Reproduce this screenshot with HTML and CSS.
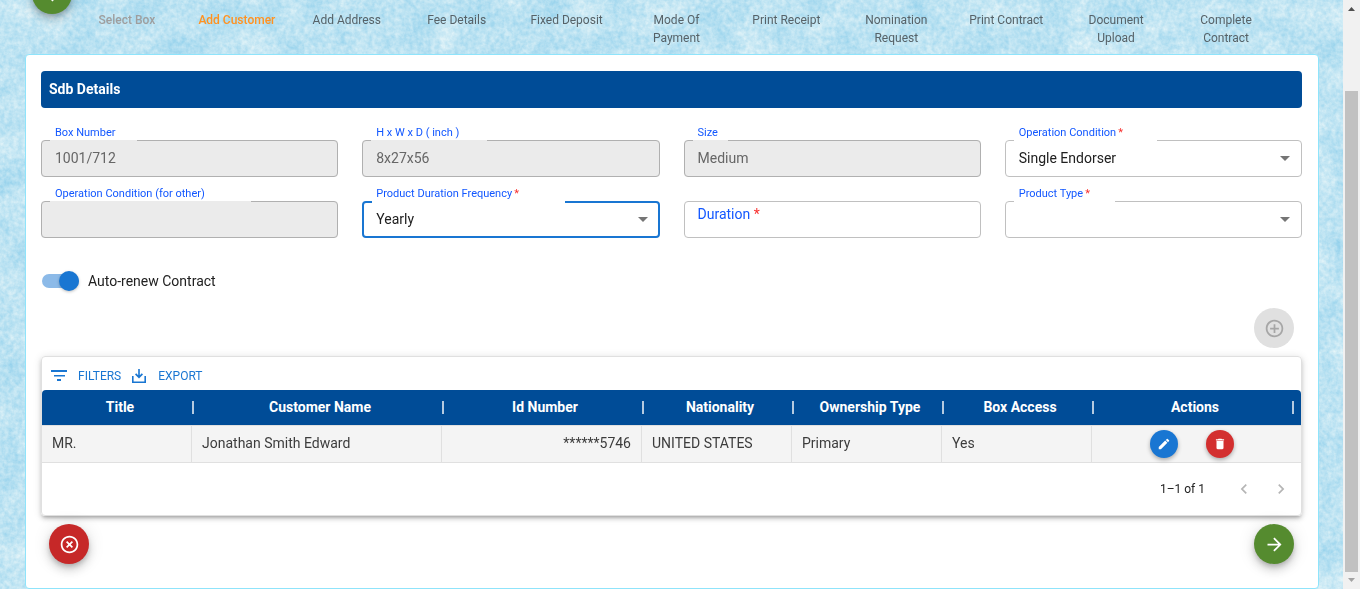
FILE: index.html
```html
<!DOCTYPE html>
<html lang="en">
<head>
<meta charset="utf-8">
<meta name="viewport" content="width=device-width, initial-scale=1">
<title>Add Customer</title>
<link rel="stylesheet" href="styles.css">
</head>
<body>
<svg class="texture" aria-hidden="true">
  <filter id="paper" x="0" y="0" width="100%" height="100%" color-interpolation-filters="sRGB">
    <feTurbulence type="fractalNoise" baseFrequency="0.03" numOctaves="3" seed="8"/>
    <feColorMatrix result="blotches" values="0.5 0 0 0 0.49  0.22 0 0 0 0.78  0.08 0 0 0 0.91  0 0 0 0 1"/>
    <feTurbulence type="fractalNoise" baseFrequency="0.22" numOctaves="3" seed="3"/>
    <feColorMatrix result="grain" values="0.5 0 0 0 0.49  0.22 0 0 0 0.78  0.08 0 0 0 0.91  0 0 0 0 1"/>
    <feComposite in="blotches" in2="grain" operator="arithmetic" k2="0.5" k3="0.5"/>
  </filter>
  <rect width="100%" height="100%" filter="url(#paper)"/>
</svg>
<div class="app">
  <div class="page">
    <header class="stepper">
      <button class="fab fab-green" type="button" aria-label="Back">
        <svg viewBox="0 0 24 24"><path d="M20 11H7.83l5.59-5.59L12 4l-8 8 8 8 1.41-1.41L7.83 13H20z"/></svg>
      </button>
      <ol class="steps">
        <li class="step done">Select Box</li>
        <li class="step active">Add Customer</li>
        <li class="step">Add Address</li>
        <li class="step">Fee Details</li>
        <li class="step">Fixed Deposit</li>
        <li class="step">Mode Of Payment</li>
        <li class="step">Print Receipt</li>
        <li class="step">Nomination Request</li>
        <li class="step">Print Contract</li>
        <li class="step">Document Upload</li>
        <li class="step">Complete Contract</li>
      </ol>
    </header>

    <main class="panel">
      <h1 class="banner">Sdb Details</h1>

      <form class="fields">
        <div class="field">
          <label class="field-label" for="box">Box Number</label>
          <div class="control disabled"><input id="box" value="1001/712" disabled><fieldset aria-hidden="true"><legend>Box Number</legend></fieldset></div>
        </div>
        <div class="field">
          <label class="field-label" for="dims">H x W x D ( inch )</label>
          <div class="control disabled"><input id="dims" value="8x27x56" disabled><fieldset aria-hidden="true"><legend>H x W x D ( inch )</legend></fieldset></div>
        </div>
        <div class="field">
          <label class="field-label" for="size">Size</label>
          <div class="control disabled"><input id="size" value="Medium" disabled><fieldset aria-hidden="true"><legend>Size</legend></fieldset></div>
        </div>
        <div class="field">
          <label class="field-label" for="cond">Operation Condition<span class="req">*</span></label>
          <div class="control"><select id="cond"><option>Single Endorser</option></select><svg class="caret" viewBox="0 0 10 5"><path d="M0 0h10L5 5z"/></svg><fieldset aria-hidden="true"><legend>Operation Condition *</legend></fieldset></div>
        </div>
        <div class="field">
          <label class="field-label" for="other">Operation Condition (for other)</label>
          <div class="control disabled"><input id="other" disabled><fieldset aria-hidden="true"><legend>Operation Condition (for other)</legend></fieldset></div>
        </div>
        <div class="field">
          <label class="field-label" for="freq">Product Duration Frequency<span class="req">*</span></label>
          <div class="control focused"><select id="freq"><option>Yearly</option></select><svg class="caret" viewBox="0 0 10 5"><path d="M0 0h10L5 5z"/></svg><fieldset aria-hidden="true"><legend>Product Duration Frequency *</legend></fieldset></div>
        </div>
        <div class="field">
          <div class="control"><label class="inner-label" for="duration">Duration<span class="req"> *</span></label><input id="duration"><fieldset aria-hidden="true"></fieldset></div>
        </div>
        <div class="field">
          <label class="field-label" for="type">Product Type<span class="req">*</span></label>
          <div class="control"><select id="type"><option></option></select><svg class="caret" viewBox="0 0 10 5"><path d="M0 0h10L5 5z"/></svg><fieldset aria-hidden="true"><legend>Product Type *</legend></fieldset></div>
        </div>
      </form>

      <label class="switch-row"><input class="switch" type="checkbox" role="switch" checked>Auto-renew Contract</label>

      <div class="add-row">
        <button class="fab fab-disabled" type="button" aria-label="Add customer" disabled>
          <svg viewBox="0 0 24 24"><path d="M13 7h-2v4H7v2h4v4h2v-4h4v-2h-4zm-1-5C6.48 2 2 6.48 2 12s4.48 10 10 10 10-4.48 10-10S17.52 2 12 2m0 18c-4.41 0-8-3.59-8-8s3.59-8 8-8 8 3.59 8 8-3.59 8-8 8"/></svg>
        </button>
      </div>

      <section class="grid-card">
        <div class="toolbar">
          <button class="tool" type="button"><svg viewBox="0 0 18 18"><path d="M1 3h16v2H1zM4 8h11v1.500H4zM7 12h4v2H7z"/></svg>FILTERS</button>
          <button class="tool" type="button"><svg viewBox="0 0 18 18"><path d="M8.200 2h1.600v6.200l2-2L13 7.400l-4 4-4-4 1.200-1.200 2 2zM2 9h1.600v5.400h10.800V9H16v7H2z"/></svg>EXPORT</button>
        </div>
        <table class="grid">
          <colgroup><col class="c150"><col class="c250"><col class="c200"><col class="c150"><col class="c150"><col class="c150"><col></colgroup>
          <thead>
            <tr><th>Title</th><th>Customer Name</th><th>Id Number</th><th>Nationality</th><th>Ownership Type</th><th>Box Access</th><th>Actions</th></tr>
          </thead>
          <tbody>
            <tr>
              <td>MR.</td><td>Jonathan Smith Edward</td><td class="num">******5746</td><td>UNITED STATES</td><td>Primary</td><td>Yes</td>
              <td>
                <div class="actions">
                  <button class="mini mini-blue" type="button" aria-label="Edit"><svg viewBox="0 0 24 24"><path d="M3 17.250V21h3.750L17.810 9.940l-3.750-3.750zM20.710 7.040c.39-.39.39-1.020 0-1.410l-2.340-2.340a.996.996 0 0 0-1.410 0l-1.830 1.830 3.750 3.750z"/></svg></button>
                  <button class="mini mini-red" type="button" aria-label="Delete"><svg viewBox="0 0 24 24"><path d="M6 19c0 1.100.9 2 2 2h8c1.100 0 2-.9 2-2V7H6zM19 4h-3.500l-1-1h-5l-1 1H5v2h14z"/></svg></button>
                </div>
              </td>
            </tr>
          </tbody>
        </table>
        <div class="pager">
          <span class="range">1–1 of 1</span>
          <button type="button" aria-label="Previous page" disabled><svg viewBox="0 0 24 24"><path d="M15.410 7.410 14 6l-6 6 6 6 1.410-1.410L10.830 12z"/></svg></button>
          <button type="button" aria-label="Next page" disabled><svg viewBox="0 0 24 24"><path d="M8.590 16.590 13.170 12 8.590 7.410 10 6l6 6-6 6z"/></svg></button>
        </div>
      </section>

      <footer class="footer">
        <button class="fab fab-red" type="button" aria-label="Cancel">
          <svg viewBox="0 0 24 24"><path d="M12 2C6.470 2 2 6.470 2 12s4.470 10 10 10 10-4.470 10-10S17.530 2 12 2m0 18c-4.410 0-8-3.590-8-8s3.590-8 8-8 8 3.590 8 8-3.590 8-8 8m2.590-12L12 10.590 9.410 8 8 9.410 10.590 12 8 14.590 9.410 16 12 13.410 14.590 16 16 14.590 13.410 12 16 9.410z"/></svg>
        </button>
        <button class="fab fab-green" type="button" aria-label="Next">
          <svg viewBox="0 0 24 24"><path d="m12 4-1.410 1.410L16.170 11H4v2h12.170l-5.580 5.590L12 20l8-8z"/></svg>
        </button>
      </footer>
    </main>
  </div>

  <div class="scrollbar" aria-hidden="true">
    <svg class="arrow up" viewBox="0 0 7 4"><path d="M0 4h7L3.500 0z"/></svg>
    <div class="track"><div class="thumb"></div></div>
    <svg class="arrow down" viewBox="0 0 7 4"><path d="M0 0h7L3.500 4z"/></svg>
  </div>
</div>
</body>
</html>
```
FILE: styles.css
```css
* { box-sizing: border-box; }

body {
  margin: 0;
  background: #b9e3f3;
  color: #212121;
  font: 14px/20px Roboto, "Liberation Sans", sans-serif;
}

button, input, select { font: inherit; color: inherit; }
button { border: 0; padding: 0; background: none; cursor: pointer; }
button svg { display: block; fill: currentColor; }

.texture { position: fixed; inset: 0; width: 100%; height: 100%; z-index: -1; }

.app { display: flex; height: 100vh; overflow: hidden; }
.page { flex: 1; min-width: 0; display: flex; flex-direction: column; overflow: hidden; }

/* Stepper */
.stepper {
  display: flex;
  align-items: flex-start;
  margin-top: -26px;
  padding: 0 62px 0 32px;
  min-height: 80px;
}
.steps {
  flex: 1;
  display: flex;
  margin: 0;
  padding: 37px 0 0;
  list-style: none;
}
.step {
  flex: 1 1 0;
  padding: 0 16px;
  text-align: center;
  font-size: 12px;
  line-height: 18px;
  color: #566268;
}
.step.done { color: #9e9e9e; font-weight: 500; }
.step.active { color: #ff9221; font-weight: 500; }

/* Round buttons */
.fab {
  width: 40px;
  height: 40px;
  flex: none;
  display: grid;
  place-items: center;
  border-radius: 50%;
  color: #fff;
  box-shadow: 0 3px 5px -1px rgba(0,0,0,.2), 0 6px 10px rgba(0,0,0,.14), 0 1px 18px rgba(0,0,0,.12);
}
.fab svg { width: 21px; height: 21px; }
.fab-green { background: #558b2f; }
.fab-red { background: #c62828; }
.fab-disabled { background: #e0e0e0; color: #a6a6a6; box-shadow: none; }

/* Panel */
.panel {
  flex: 1;
  margin: 0 24px 0 25px;
  padding: 16px 16px 0 15px;
  background: #fff;
  border: 1px solid #8fe4fb;
  border-radius: 4px;
}
.banner {
  margin: 0;
  padding: 8px;
  border-radius: 4px;
  background: #004c97;
  color: #fff;
  font-size: 14px;
  line-height: 21px;
  font-weight: 700;
}

/* Fields */
.fields {
  display: grid;
  grid-template-columns: repeat(4, minmax(0, 1fr));
  gap: 10px 24px;
  margin-top: 18px;
}
.field { display: flex; flex-direction: column; justify-content: flex-end; }
.field-label {
  padding-left: 14px;
  font-size: 11px;
  line-height: 14px;
  color: #1257ff;
  white-space: nowrap;
}
.req { color: #f8312f; }
.field-label .req { margin-left: 2px; }
.control { position: relative; height: 37px; border-radius: 4px; }
.control input, .control select {
  display: block;
  width: 100%;
  height: 100%;
  padding: 0 14px 2px;
  border: 0;
  border-radius: 4px;
  outline: 0;
  background: transparent;
  appearance: none;
  opacity: 1;
}
.control.disabled { background: #ebebeb; color: #666; }
.control fieldset {
  position: absolute;
  inset: 0;
  margin: 0;
  padding: 0 8px;
  min-width: 0;
  border: 1px solid #c0c0c0;
  border-radius: 4px;
  pointer-events: none;
}
.control.disabled fieldset { border-color: #b0b0b0; }
.control.focused fieldset { border: 2px solid #1976d2; }
.control legend {
  height: 0;
  padding: 0 5px;
  overflow: hidden;
  visibility: hidden;
  white-space: nowrap;
}
.caret {
  position: absolute;
  right: 12px;
  top: 16px;
  width: 10px;
  height: 5px;
  fill: #757575;
  pointer-events: none;
}
.inner-label {
  position: absolute;
  left: 14px;
  top: 3px;
  color: #1257ff;
}

/* Switch */
.switch-row {
  display: flex;
  align-items: center;
  gap: 9px;
  width: max-content;
  margin: 33px 0 0 1px;
}
.switch {
  position: relative;
  appearance: none;
  width: 37px;
  height: 14px;
  margin: 0;
  border-radius: 7px;
  background: #8cbae8;
}
.switch::after {
  content: "";
  position: absolute;
  right: 0;
  top: -3px;
  width: 20px;
  height: 20px;
  border-radius: 50%;
  background: #1976d2;
  box-shadow: 0 1px 3px rgba(0,0,0,.25);
}

.add-row { display: flex; justify-content: flex-end; padding: 17px 8px 8px; }

/* Table card */
.grid-card {
  border: 1px solid #e0e0e0;
  border-radius: 4px;
  box-shadow: 0 3px 3px -2px rgba(0,0,0,.2), 0 3px 4px rgba(0,0,0,.14), 0 1px 8px rgba(0,0,0,.12);
}
.toolbar { display: flex; gap: 9px; padding: 4px 8px 0; height: 33px; }
.tool {
  display: flex;
  align-items: center;
  gap: 10px;
  color: #1976d2;
  font-size: 12px;
}
.tool svg { width: 18px; height: 18px; }

.grid { width: 100%; table-layout: fixed; border-collapse: separate; border-spacing: 0; }
.c150 { width: 150px; }
.c200 { width: 200px; }
.c250 { width: 250px; }
.grid th {
  position: relative;
  height: 35px;
  padding: 0 0 2px 6px;
  background: #004c97;
  color: #fff;
  font-weight: 700;
}
.grid th::after {
  content: "";
  position: absolute;
  right: -2px;
  top: 11px;
  width: 2px;
  height: 13px;
  background: #b5cae0;
  z-index: 1;
}
.grid th:first-child { border-top-left-radius: 4px; }
.grid th:last-child { border-top-right-radius: 4px; padding-right: 9px; }
.grid th:last-child::after { right: 7px; }
.grid td {
  height: 38px;
  padding: 0 10px 2px;
  background: #f4f4f4;
  color: #3c3c3c;
  border-top: 1px solid #e0e0e0;
  border-right: 1px solid #e0e0e0;
  border-bottom: 1px solid #e0e0e0;
}
.grid td:last-child { border-right: 0; padding: 0 9px 0 0; }
.grid .num { text-align: right; }
.actions { display: flex; justify-content: center; gap: 28px; }
.mini {
  display: grid;
  place-items: center;
  width: 28px;
  height: 28px;
  border-radius: 50%;
  color: #fff;
  box-shadow: 0 2px 4px rgba(0,0,0,.3);
}
.mini svg { width: 14px; height: 14px; }
.mini-blue { background: #1976d2; }
.mini-red { background: #d32f2f; }

.pager { display: flex; align-items: center; justify-content: flex-end; height: 52px; padding-right: 10px; gap: 17px; }
.range { font-size: 12px; padding-right: 12px; }
.pager button { color: #b5b5b5; }
.pager svg { width: 20px; height: 20px; }

.footer { display: flex; justify-content: space-between; padding: 8px 8px 24px; }

/* Scrollbar */
.scrollbar {
  flex: none;
  width: 17px;
  display: flex;
  flex-direction: column;
  align-items: center;
  padding: 7px 0;
  background: #f1f1f1;
}
.arrow { width: 7px; height: 4px; flex: none; }
.up { fill: #505050; }
.down { fill: #a3a3a3; }
.track { flex: 1; width: 13px; display: flex; flex-direction: column; padding-bottom: 6px; }
.track::before { content: ""; flex: 1; }
.thumb { flex: 6; background: #c1c1c1; }
```
